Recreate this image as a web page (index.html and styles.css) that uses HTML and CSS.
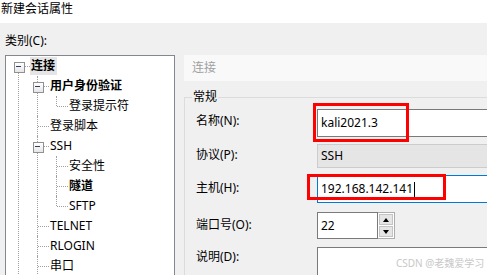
FILE: index.html
```html
<!DOCTYPE html>
<html lang="zh-CN">
<head>
    <meta charset="UTF-8">
    <title>新建会话属性</title>
    <link rel="stylesheet" href="styles.css">
</head>
<body>
<div class="titlebar">新建会话属性</div>
<div class="dialog">
    <div class="left">
        <div class="cat">类别(C):</div>
        <div class="treebox">
            <ul class="tree">
                <li class="first">
                    <div class="node"><span class="tg minus"></span><span class="lbl sel b">连接</span></div>
                    <ul>
                        <li>
                            <div class="node"><span class="tg minus"></span><span class="lbl b">用户身份验证</span></div>
                            <ul>
                                <li class="last"><div class="node"><span class="tg"></span><span class="lbl">登录提示符</span></div></li>
                            </ul>
                        </li>
                        <li><div class="node"><span class="tg"></span><span class="lbl">登录脚本</span></div></li>
                        <li>
                            <div class="node"><span class="tg minus"></span><span class="lbl">SSH</span></div>
                            <ul>
                                <li><div class="node"><span class="tg"></span><span class="lbl">安全性</span></div></li>
                                <li><div class="node"><span class="tg"></span><span class="lbl b">隧道</span></div></li>
                                <li class="last"><div class="node"><span class="tg"></span><span class="lbl">SFTP</span></div></li>
                            </ul>
                        </li>
                        <li><div class="node"><span class="tg"></span><span class="lbl">TELNET</span></div></li>
                        <li><div class="node"><span class="tg"></span><span class="lbl">RLOGIN</span></div></li>
                        <li class="more"><div class="node"><span class="tg"></span><span class="lbl">串口</span></div></li>
                    </ul>
                </li>
            </ul>
        </div>
    </div>
    <div class="right">
        <div class="pagehead">连接</div>
        <fieldset class="group">
            <legend>常规</legend>
            <div class="row r-name">
                <label>名称(N):</label>
                <div class="field">
                    <div class="input">kali2021.3</div>
                    <div class="mark mark-name"></div>
                </div>
            </div>
            <div class="row r-proto">
                <label>协议(P):</label>
                <div class="field">
                    <div class="input disabled">SSH</div>
                </div>
            </div>
            <div class="row r-host">
                <label>主机(H):</label>
                <div class="field">
                    <div class="input focus">192.168.142.141<span class="caret"></span></div>
                    <div class="mark mark-host"></div>
                </div>
            </div>
            <div class="row r-port">
                <label>端口号(O):</label>
                <div class="field port">
                    <div class="input short">22</div>
                    <div class="spin">
                        <span class="up"></span>
                        <span class="down"></span>
                    </div>
                </div>
            </div>
            <div class="row r-desc">
                <label>说明(D):</label>
                <div class="field">
                    <div class="input area"></div>
                    <div class="wm">CSDN @老魏爱学习</div>
                </div>
            </div>
        </fieldset>
    </div>
</div>
</body>
</html>
```

FILE: styles.css
```css
*{
    margin:0;
    padding:0;
    box-sizing:border-box;
}
body{
    width:487px;
    height:275px;
    overflow:hidden;
    background:#f0f0f0;
    color:#000;
    font-family:"Noto Sans","Noto Sans CJK SC",sans-serif;
    font-size:12px;
    line-height:16px;
}
.titlebar{
    height:23px;
    background:#fff;
    padding:1px 0 0 1px;
}
.dialog{
    display:flex;
    gap:9px;
    height:252px;
    padding-left:5px;
    overflow:hidden;
}
.left{
    width:170px;
    flex:none;
}
.cat{
    margin-top:10px;
    height:16px;
}
.treebox{
    margin-top:6px;
    height:240px;
    background:#fff;
    border:1px solid #828790;
    padding:0 0 0 4px;
    overflow:hidden;
}
.tree, .tree ul{
    list-style:none;
}
.tree ul{
    padding-left:19px;
}
.tree li{
    position:relative;
}
.tree li::before{
    content:"";
    position:absolute;
    left:8px;
    top:0;
    bottom:0;
    border-left:1px dotted #a0a0a0;
}
.tree li.first::before{
    top:10px;
    bottom:-40px;
}
.tree li.more::before{
    bottom:-20px;
}
.tree li.last::before{
    bottom:auto;
    height:10px;
}
.node{
    position:relative;
    display:flex;
    align-items:center;
    height:20px;
}
.node::after{
    content:"";
    position:absolute;
    left:9px;
    top:10px;
    width:11px;
    border-top:1px dotted #a0a0a0;
}
.tg{
    position:relative;
    width:20px;
    height:20px;
    flex:none;
}
.tg.minus::before{
    content:"";
    position:absolute;
    z-index:2;
    left:4px;
    top:6px;
    width:9px;
    height:9px;
    border:1px solid #919191;
    background:linear-gradient(#fff,#e6e6e6);
}
.tg.minus::after{
    content:"";
    position:absolute;
    z-index:3;
    left:6px;
    top:10px;
    width:5px;
    height:1px;
    background:#2d3f66;
}
.lbl{
    padding:0 2px 0 1px;
    line-height:18px;
    white-space:nowrap;
}
.lbl.b{
    font-weight:bold;
}
.lbl.sel{
    background:#e5e5e5;
}
.right{
    width:330px;
    flex:none;
    padding-top:32px;
}
.pagehead{
    height:26px;
    line-height:26px;
    padding-left:8px;
    background:#f9f9f9;
    color:#a0a0a0;
}
.group{
    margin-top:8px;
    border:1px solid #dcdcdc;
    padding:0 0 10px 11px;
    height:200px;
}
.group legend{
    margin-left:-4px;
    padding:0 1px;
    line-height:16px;
}
.row{
    display:flex;
    align-items:center;
}
.row label{
    width:121px;
    flex:none;
    margin-bottom:2px;
}
.field{
    position:relative;
    flex:1;
    height:100%;
    display:flex;
}
.r-name{
    margin-top:4px;
    height:28px;
}
.r-name label{
    margin-bottom:4px;
}
.r-proto{
    margin-top:7px;
    height:24px;
}
.r-host{
    margin-top:7px;
    height:28px;
}
.r-port{
    margin-top:9px;
    height:27px;
}
.r-desc{
    margin-top:8px;
    height:60px;
    align-items:flex-start;
}
.r-desc label{
    padding-top:2px;
}
.input{
    flex:1;
    height:100%;
    background:#fff;
    border:1px solid #7a7a7a;
    padding-left:3px;
    display:flex;
    align-items:center;
    white-space:nowrap;
}
.input.disabled{
    background:#e5e5e5;
    border-color:#cccccc;
}
.input.focus{
    border-color:#0078d7;
}
.caret{
    display:inline-block;
    width:1px;
    height:15px;
    margin-left:1px;
    background:#000;
}
.port{
    flex:none;
}
.input.short{
    flex:none;
    width:61px;
}
.spin{
    width:17px;
    height:100%;
    display:flex;
    flex-direction:column;
    gap:1px;
    border:1px solid #adadad;
    border-left:none;
    background:#fff;
    padding:1px;
}
.spin span{
    flex:1;
    background:#e5e5e5;
    border:1px solid #c4c4c4;
    position:relative;
}
.spin .up::after,
.spin .down::after{
    content:"";
    position:absolute;
    left:3px;
    top:3px;
    border-left:3px solid transparent;
    border-right:3px solid transparent;
}
.spin .up::after{
    border-bottom:4px solid #000;
}
.spin .down::after{
    border-top:4px solid #000;
}
.input.area{
    align-items:flex-start;
}
.mark{
    position:absolute;
    border:3px solid #f00;
}
.mark-name{
    left:-4px;
    top:-6px;
    width:96px;
    height:39px;
}
.mark-host{
    left:-10px;
    top:-1px;
    width:139px;
    height:26px;
}
.wm{
    position:absolute;
    left:79px;
    top:8px;
    font-size:10px;
    color:#c8c8c8;
    white-space:nowrap;
}
```
